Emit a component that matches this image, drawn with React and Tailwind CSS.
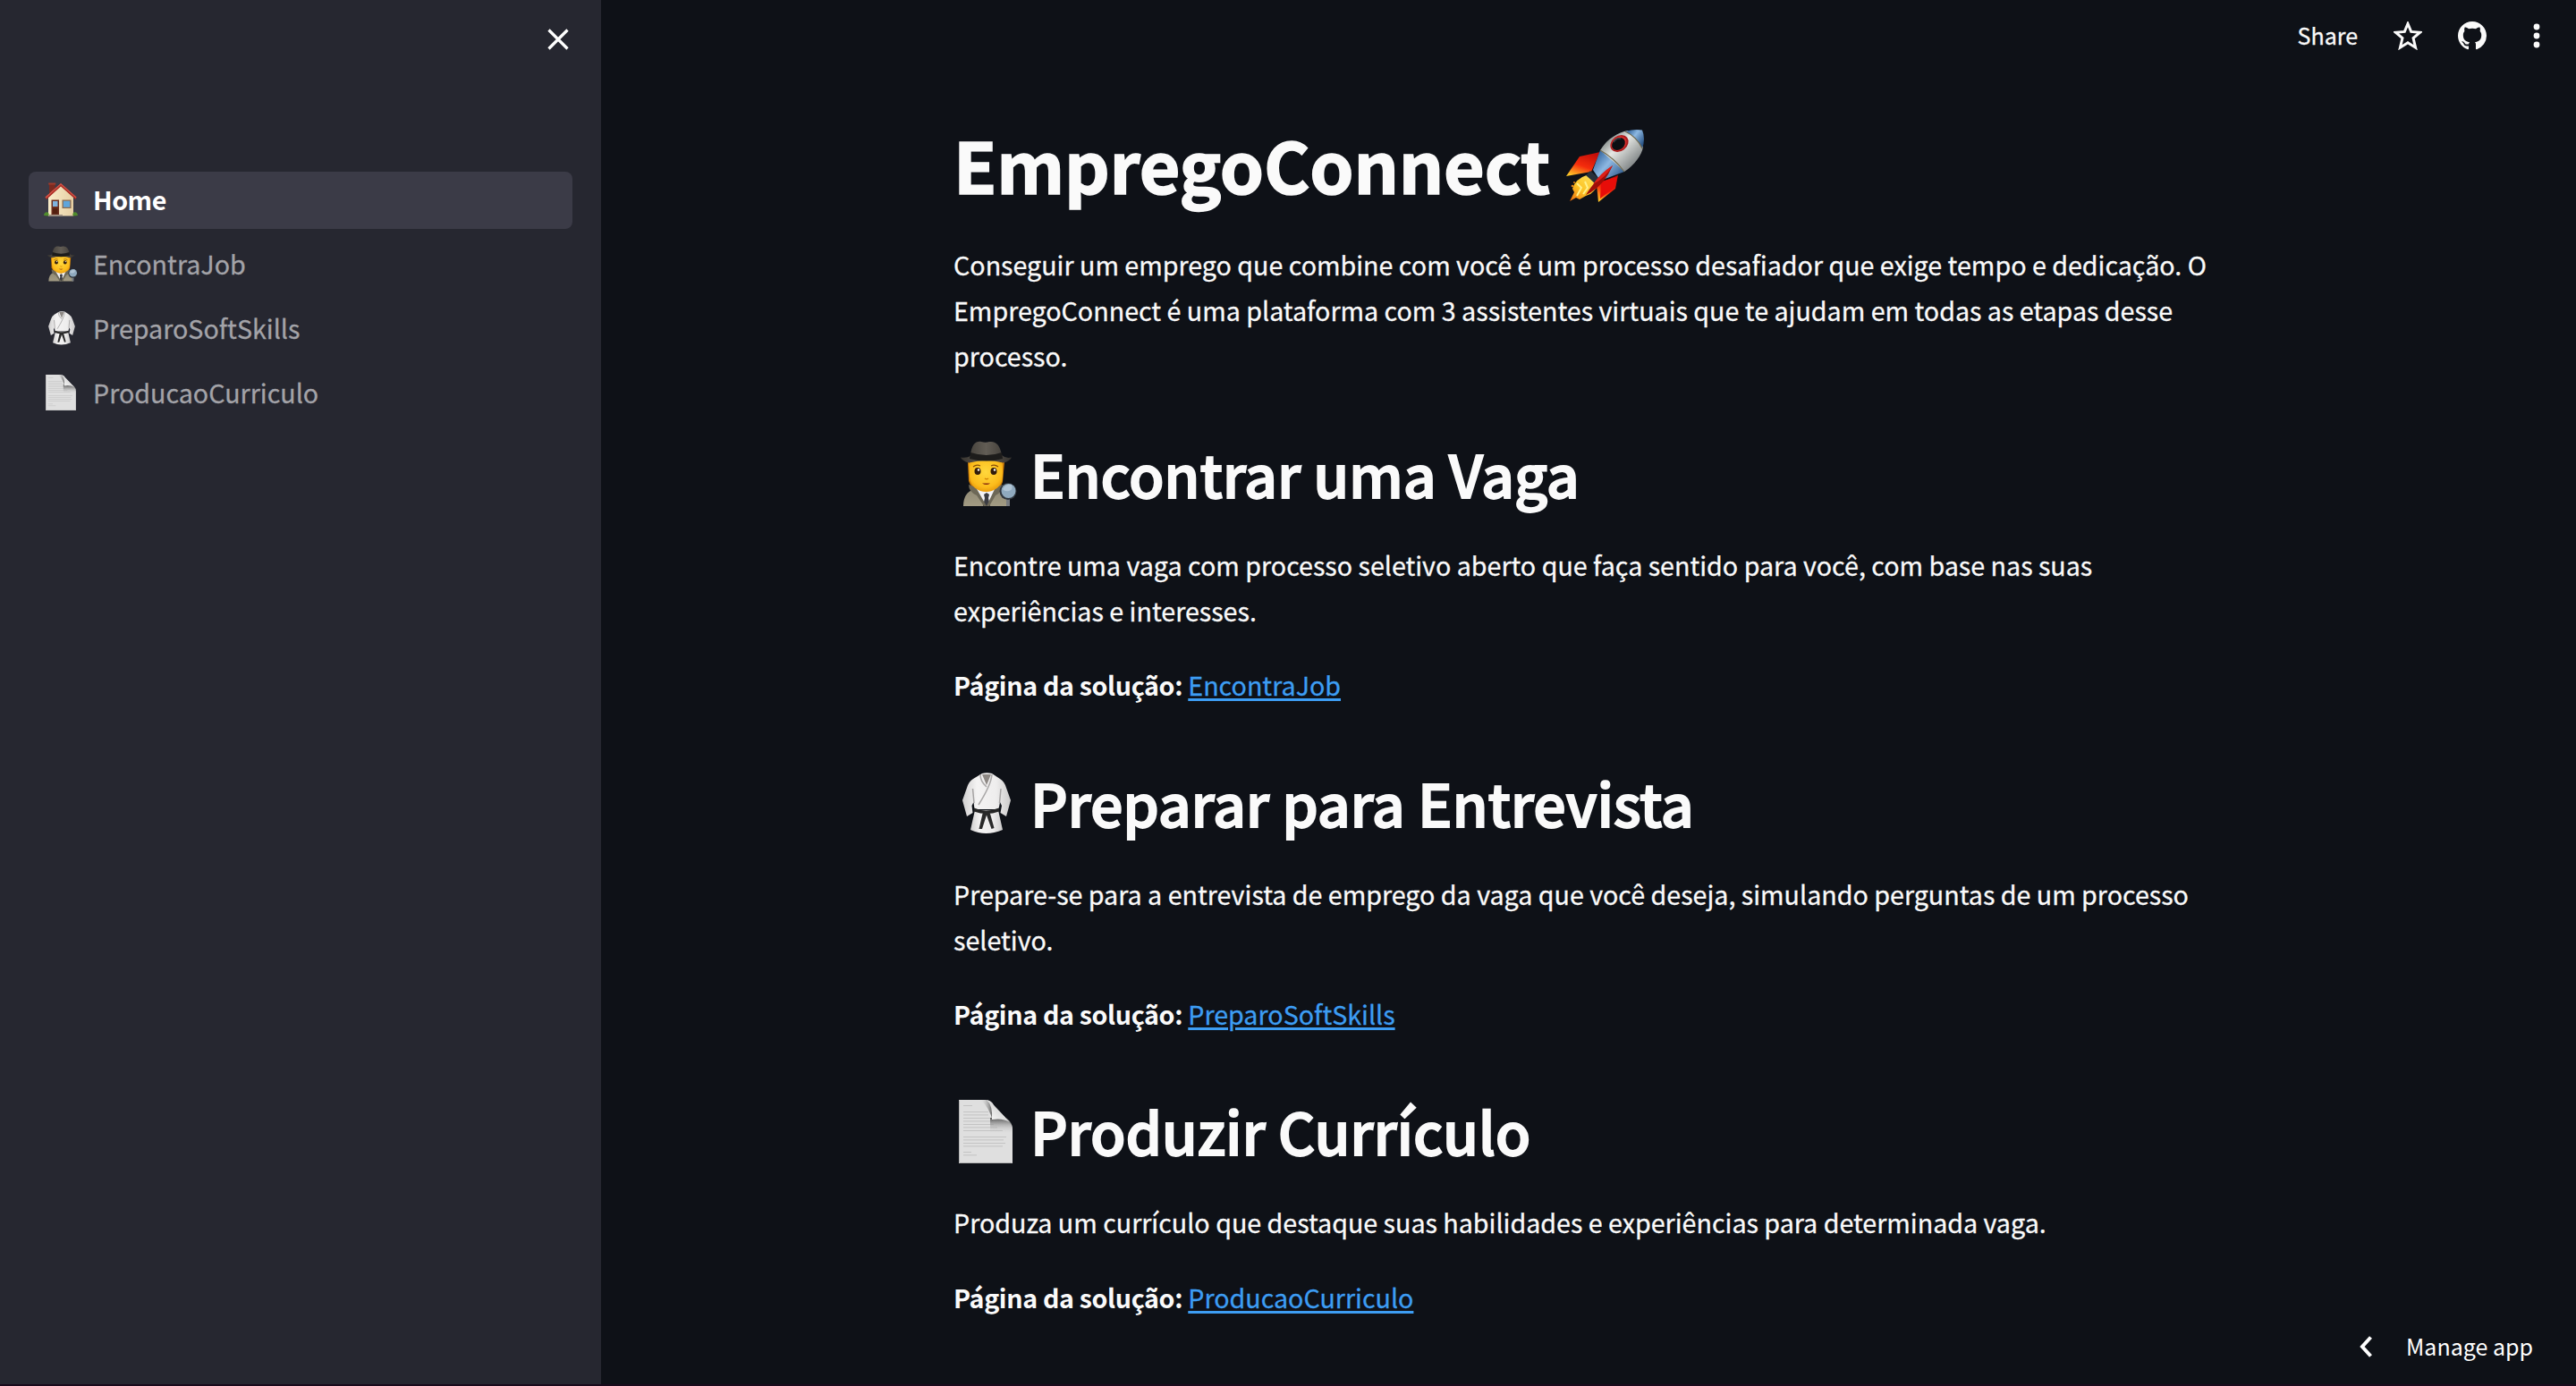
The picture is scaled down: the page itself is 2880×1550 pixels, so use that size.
function HouseIcon({ className }) {
  return (
    <svg viewBox="0 0 76 76" className={className}>
      <defs>
        <linearGradient id="wall" x1="0" x2="1">
          <stop offset="0" stopColor="#f9ecc9" />
          <stop offset="1" stopColor="#e6cfa4" />
        </linearGradient>
      </defs>
      <rect x="12" y="1" width="13" height="24" fill="#7c2a20" />
      <rect x="10.500" y="0" width="16" height="4" fill="#a03a2c" />
      <path d="M10 32 38 6 66 32V74H10Z" fill="url(#wall)" />
      <path d="M38 1 73 32 71 37 38 8 6 37 3 32Z" fill="#ad2c24" />
      <path d="M38 1 73 32 72 34 38 4 5 34 3 32Z" fill="#d2574a" />
      <rect x="17" y="38" width="17" height="35" fill="#6b2f1e" />
      <rect x="20" y="41" width="11" height="12" fill="#7fb4dd" />
      <rect x="20" y="57" width="11" height="12" fill="#53200f" />
      <rect x="41" y="38" width="20" height="19" fill="#8d6a4b" />
      <rect x="43.500" y="40.500" width="15" height="14" fill="#5fa5db" />
      <rect x="12" y="71" width="30" height="4" fill="#9a8d80" />
      <path d="M0 73c0-6 5-9 9-7 3 2 3 7 1 8Z" fill="#4f8a2c" />
      <path d="M76 73c0-6-5-9-9-7-3 2-3 7-1 8Z" fill="#4f8a2c" />
    </svg>
  );
}

function DetectiveIcon({ className, id }) {
  return (
    <svg viewBox="0 0 64 74" className={className}>
      <defs>
        <linearGradient id={`${id}-hat`} x1="0" x2="1">
          <stop offset="0" stopColor="#37342f" />
          <stop offset="0.5" stopColor="#625d55" />
          <stop offset="1" stopColor="#34312d" />
        </linearGradient>
        <radialGradient id={`${id}-face`} cx="0.5" cy="0.4" r="0.65">
          <stop offset="0" stopColor="#ffd83d" />
          <stop offset="0.7" stopColor="#fcbc1b" />
          <stop offset="1" stopColor="#e29108" />
        </radialGradient>
        <linearGradient id={`${id}-coat`} x1="0" y1="0" x2="0" y2="1">
          <stop offset="0" stopColor="#8f8974" />
          <stop offset="1" stopColor="#a39c84" />
        </linearGradient>
      </defs>
      <path d="M9 24h41l-2 22q-2 6-7 8H17q-5-3-7-9Z" fill="#c97a08" />
      <path d="M4 73q0-15 12-19l14 6 14-6q11 4 11 19Z" fill={`url(#${id}-coat)`} />
      <path d="m20 52-3 5 12 16 13-16-3-5Z" fill="#f3f3f5" />
      <path d="m27 60 3-2 3 2-1 4 2 9h-8l2-9Z" fill="#3b3c42" />
      <path d="m18 52-8-3q0 8 9 12l8 12h3Z" fill="#6d6857" />
      <path d="m40 52 8-3q0 8-8 12l-7 12h-3Z" fill="#6d6857" />
      <path d="M10 25q9-5 20-5t18 5v15c0 11-10 17-18.500 17S11 51 11 40Z" fill={`url(#${id}-face)`} />
      <ellipse cx="20" cy="34" rx="3.500" ry="4" fill="#321c0b" />
      <ellipse cx="38" cy="34" rx="3.500" ry="4" fill="#321c0b" />
      <circle cx="21" cy="32.500" r="1.200" fill="#fff" />
      <circle cx="39" cy="32.500" r="1.200" fill="#fff" />
      <path d="M15 29q4-3 8-1M35 28q4-2 8 1" stroke="#8a4f07" strokeWidth="1.200" fill="none" />
      <path d="M28 42q2 1.500 4 0" stroke="#d28508" strokeWidth="1.500" fill="none" />
      <path d="M25 47.500h9q-4 3-9 0Z" fill="#83270e" />
      <path d="M1 18.500q8 1 11-2C13 4 18 0 24 1q5 1.500 9 0c8-1 12 4 14 15q4 4 11 2.500-2 4-9 6-19-5-39 0-7-2-9-6Z" fill={`url(#${id}-hat)`} />
      <path d="M12 13q18 6 35 0l1 7q-18 5-37 0Z" fill="#1d1c1b" />
      <rect x="52" y="65" width="4" height="8" fill="#777b80" />
      <circle cx="54" cy="56.500" r="9.500" fill="#30363d" />
      <circle cx="54.500" cy="56" r="8" fill="#8fa9be" />
      <path d="M48 54q3-6 10-5 2 6-3 7t-7-2Z" fill="#b0c4d4" />
    </svg>
  );
}

function KimonoIcon({ className, id }) {
  return (
    <svg viewBox="0 0 54 69" className={className}>
      <defs>
        <linearGradient id={`${id}-cloth`} x1="0" x2="1">
          <stop offset="0" stopColor="#d0cfcf" />
          <stop offset="0.3" stopColor="#f4f3f3" />
          <stop offset="0.7" stopColor="#eeeded" />
          <stop offset="1" stopColor="#cbcaca" />
        </linearGradient>
      </defs>
      <path d="M14 42 9 64q17 8 36 0l-5-22Z" fill={`url(#${id}-cloth)`} />
      <path d="M22 1 12 7Q7 10 5 17L0 31 5 49 11.500 45 10.500 37 12.500 33 13.500 41H40.500L42 33 44 37 42.500 45 49 49 54 31 49 17Q47 10 42 7L33 1Q27-.5 22 1Z" fill={`url(#${id}-cloth)`} />
      <path d="M22 2h10l-5 12Z" fill="#8d8884" />
      <path d="M20 2q0 8 7 14M33 2q-1 12-15 34" stroke="#aaa8a8" strokeWidth="1.600" fill="none" />
      <path d="m11.500 18 1.500 16M43 18l-1.500 16" stroke="#a5a3a3" strokeWidth="1.500" fill="none" />
      <path d="M13 39.500q13 6 28 0v4q-14 5-28 0Z" fill="#252525" />
      <path d="M25 43h4l2 3 4.500 16-3 1L27 47.500 22 63h-3.500l4-17Z" fill="#292929" />
    </svg>
  );
}

const PAGE_LINES = [
  [5, 6, 10], [5, 13, 28], [5, 16.5, 28], [5, 20, 30], [5, 23.5, 32], [5, 27, 34], [5, 30.5, 38], [5, 34, 44],
  [5, 41, 48], [5, 44.5, 45], [5, 48, 47], [5, 51.5, 44], [5, 58, 9], [5, 61.5, 15],
];

function PageIcon({ className, id }) {
  return (
    <svg viewBox="0 0 60 71" className={className}>
      <defs>
        <linearGradient id={`${id}-curl`} x1="0" y1="1" x2="1" y2="0">
          <stop offset="0" stopColor="#ffffff" />
          <stop offset="1" stopColor="#bdbdbd" />
        </linearGradient>
        <linearGradient id={`${id}-top`} x1="0" x2="1">
          <stop offset="0" stopColor="#dfdfdf" stopOpacity="0" />
          <stop offset="1" stopColor="#555555" />
        </linearGradient>
        <linearGradient id={`${id}-shade`} x1="0" y1="0" x2="0" y2="1">
          <stop offset="0" stopColor="#555555" />
          <stop offset="1" stopColor="#dfdfdf" stopOpacity="0" />
        </linearGradient>
      </defs>
      <path d="M0 0H30Q36 1 39 6L57 25Q60 28 60 33V71H0Z" fill="#dfdfdf" />
      {PAGE_LINES.map(([x, y, w]) => (
        <rect key={y} x={x} y={y} width={w} height="0.8" fill="#bcbcbc" />
      ))}
      <path d="M24 0h6q6 1 8 6v18Q34 8 24 0Z" fill={`url(#${id}-top)`} />
      <path d="M35 20h18q7 5 7 13v5H35Z" fill={`url(#${id}-shade)`} />
      <path d="M31 0q6 1 8 6L57 25q-8-5-20-3Q38 6 31 0Z" fill={`url(#${id}-curl)`} />
      <path d="M.5.5V70.500H59.500" stroke="#b4b4b4" fill="none" />
    </svg>
  );
}

function RocketIcon({ className }) {
  return (
    <svg viewBox="0 0 88 84" className={className}>
      <defs>
        <linearGradient id="hull" x1="0.200" y1="0.200" x2="0.800" y2="0.800">
          <stop offset="0" stopColor="#8f9694" />
          <stop offset="0.350" stopColor="#e6e8e4" />
          <stop offset="1" stopColor="#84898a" />
        </linearGradient>
        <linearGradient id="blue" x1="0.100" y1="0.200" x2="0.900" y2="0.800">
          <stop offset="0" stopColor="#3c6ea5" />
          <stop offset="0.400" stopColor="#8db8e2" />
          <stop offset="1" stopColor="#2b5587" />
        </linearGradient>
        <linearGradient id="fin" x1="0.700" y1="0" x2="0.200" y2="1">
          <stop offset="0" stopColor="#c20d08" />
          <stop offset="0.550" stopColor="#f52c0c" />
          <stop offset="1" stopColor="#ffc928" />
        </linearGradient>
        <linearGradient id="flame" x1="1" y1="0" x2="0" y2="1">
          <stop offset="0" stopColor="#ffe96b" />
          <stop offset="0.600" stopColor="#fcc324" />
          <stop offset="1" stopColor="#e9670c" />
        </linearGradient>
      </defs>
      <path d="M38 26 15 31 0 53l28-5Z" fill="url(#fin)" />
      <path d="M58 52 55 67 36 82l-2-20Z" fill="url(#fin)" />
      <path d="M57 54 54 66 38 78l1-19Z" fill="#e80d09" />
      <path d="M25 51Q10 56 7 67l2 4-5 10 7-4 4 2 7-4 5-2q7-5 11-15Z" fill="url(#flame)" />
      <path d="m12 61 5 5-5 9M21 59l3 7-5 7" stroke="#fff08a" strokeWidth="2" fill="none" />
      <circle cx="7" cy="64" r="1.300" fill="#e58516" />
      <circle cx="9" cy="60" r="1" fill="#e58516" />
      <path d="m27 47 10 9-5 5-10-9Z" fill="#28313b" />
      <path d="M38 24 30 46l8 12 27-10 5-9Z" fill="url(#blue)" />
      <path d="M38 24C46 11 58 4 69 2L86 20C85 29 76 41 65 48Q51 35 38 24Z" fill="url(#hull)" />
      <path d="M66 3Q76 0 85 1.500 89 11 85 22 79 9 66 3Z" fill="url(#blue)" />
      <path d="M38 24Q54 33 65 48M66 3Q79 9 85 22" stroke="#706b50" strokeWidth="1.200" fill="none" />
      <ellipse cx="59.500" cy="16.500" rx="11" ry="8.500" transform="rotate(-38 59.500 16.500)" fill="#a9181a" />
      <ellipse cx="59" cy="16.500" rx="9.500" ry="7.500" transform="rotate(-38 59 16.500)" fill="#d42f2c" />
      <ellipse cx="58.500" cy="17" rx="8" ry="6.300" transform="rotate(-38 58.500 17)" fill="#0c0e12" />
      <path d="M53 15q3-5 8-4" stroke="#3a4046" strokeWidth="1.500" fill="none" />
      <path d="M52 41Q36 52 22 74 42 65 52 41Z" fill="#9e0d08" />
      <path d="M52 41Q38 50 30 62 44 55 52 41Z" fill="#df1e18" />
    </svg>
  );
}

const NAV = [
  { label: "Home", active: true, icon: <HouseIcon className="h-[39px] w-[38px]" /> },
  { label: "EncontraJob", icon: <DetectiveIcon id="nav-detective" className="ml-[3px] h-10 w-[35px]" /> },
  { label: "PreparoSoftSkills", icon: <KimonoIcon id="nav-kimono" className="ml-[5px] h-[38px] w-[30px]" /> },
  { label: "ProducaoCurriculo", icon: <PageIcon id="nav-page" className="ml-[2px] h-10 w-[34px]" /> },
];

const SECTIONS = [
  {
    title: "Encontrar uma Vaga",
    icon: <DetectiveIcon id="detective" className="mt-[7px] ml-[7px] h-[74px] w-[64px]" />,
    lines: [
      "Encontre uma vaga com processo seletivo aberto que faça sentido para você, com base nas suas",
      "experiências e interesses.",
    ],
    link: "EncontraJob",
  },
  {
    title: "Preparar para Entrevista",
    icon: <KimonoIcon id="kimono" className="mt-2.5 ml-[10px] h-[69px] w-[54px]" />,
    lines: [
      "Prepare-se para a entrevista de emprego da vaga que você deseja, simulando perguntas de um processo",
      "seletivo.",
    ],
    link: "PreparoSoftSkills",
  },
  {
    title: "Produzir Currículo",
    icon: <PageIcon id="page" className="mt-[9px] ml-1.5 h-[71px] w-[60px]" />,
    lines: ["Produza um currículo que destaque suas habilidades e experiências para determinada vaga."],
    link: "ProducaoCurriculo",
  },
];

function Lines({ lines }) {
  return (
    <p className="leading-[51.2px] whitespace-nowrap [-webkit-text-stroke:0.3px_#fafafa]">
      {lines.map((line) => (
        <span key={line} className="block">{line}</span>
      ))}
    </p>
  );
}

export default function App() {
  return (
    <div className="relative flex h-[1550px] w-[2880px] overflow-hidden bg-[#0e1117] font-['Noto_Sans_CJK_JP','Noto_Sans',sans-serif] text-[28.65px] text-[#fafafa]">
      <aside className="h-full w-[672px] shrink-0 bg-[#262730]">
        <div className="flex h-[192px] justify-end pt-8 pr-[36px]">
          <svg viewBox="0 0 24 24" className="size-6" stroke="#fff" strokeWidth="3.200">
            <path d="M1.500 1.500 22.500 22.500M22.500 1.500 1.500 22.500" />
          </svg>
        </div>
        <nav className="flex flex-col gap-2 px-8">
          {NAV.map((item) => (
            <a
              key={item.label}
              className={
                item.active
                  ? "flex h-16 items-center rounded-lg bg-[#3b3b47] font-bold tracking-[-0.5px] text-white"
                  : "flex h-16 items-center text-[#a3a3a8] [-webkit-text-stroke:0.3px_#a3a3a8]"
              }
            >
              <span className="flex w-[72px] shrink-0 pb-0.5 pl-[17px]">{item.icon}</span>
              <span className="pb-1 leading-[51px]">{item.label}</span>
            </a>
          ))}
        </nav>
      </aside>

      <main className="flex-1">
        <header className="flex h-[80px] items-center justify-end pr-[22px]">
          <span className="mr-[40px] pb-0.5 text-[25px] leading-10 [-webkit-text-stroke:0.3px_#fafafa]">Share</span>
          <svg viewBox="1 1 28 28" className="mr-[40px] size-8" fill="none" stroke="#fafafa" strokeWidth="2.600">
            <path d="M15 3.200 18.200 11 27 11.700 20.300 17.300 22.500 26.500 15 21.800 7.500 26.500 9.700 17.300 3 11.700 11.800 11Z" />
          </svg>
          <svg viewBox="0 0 16 16" className="mr-[46px] size-8" fill="#fafafa">
            <path d="M8 0C3.580 0 0 3.580 0 8c0 3.540 2.290 6.530 5.470 7.590.4.070.55-.17.55-.38 0-.19-.01-.82-.01-1.490-2.010.37-2.530-.49-2.690-.94-.09-.23-.48-.94-.82-1.130-.28-.15-.68-.52-.01-.53.63-.01 1.080.58 1.230.82.72 1.210 1.870.87 2.330.66.07-.52.28-.87.51-1.070-1.780-.2-3.640-.89-3.640-3.950 0-.87.31-1.590.82-2.150-.08-.2-.36-1.020.08-2.120 0 0 .67-.21 2.200.82.64-.18 1.320-.27 2-.27s1.360.09 2 .27c1.530-1.040 2.200-.82 2.200-.82.44 1.100.16 1.920.08 2.120.51.56.82 1.270.82 2.150 0 3.070-1.870 3.750-3.650 3.950.29.25.54.73.54 1.480 0 1.070-.01 1.930-.01 2.200 0 .21.15.46.55.38A8.010 8.010 0 0 0 16 8c0-4.420-3.580-8-8-8Z" />
          </svg>
          <svg viewBox="0 0 32 32" className="h-8 w-8" fill="#fafafa">
            <circle cx="10" cy="6" r="3.400" />
            <circle cx="10" cy="16" r="3.400" />
            <circle cx="10" cy="26" r="3.400" />
          </svg>
        </header>

        <div className="ml-[394px] w-[1408px] pt-[50px]">
          <h1 className="mb-[34px] flex h-[106px] text-[78.8px] leading-[106px] font-bold tracking-[-0.2px] whitespace-nowrap [-webkit-text-stroke:1.600px_#fafafa]">
            EmpregoConnect
            <RocketIcon className="mt-[14px] ml-[18px] h-[84px] w-[88px]" />
          </h1>
          <Lines
            lines={[
              "Conseguir um emprego que combine com você é um processo desafiador que exige tempo e dedicação. O",
              "EmpregoConnect é uma plataforma com 3 assistentes virtuais que te ajudam em todas as etapas desse",
              "processo.",
            ]}
          />
          {SECTIONS.map((section) => (
            <section key={section.title} className="pt-[62.200px]">
              <h2 className="mb-[34px] flex h-[86px] text-[64.5px] leading-[86px] font-medium tracking-[-0.23px] whitespace-nowrap [-webkit-text-stroke:1.800px_#fafafa]">
                <span className="flex w-[86px] shrink-0">{section.icon}</span>
                {section.title}
              </h2>
              <Lines lines={section.lines} />
              <p className="mt-8 leading-[51.2px] whitespace-nowrap">
                <strong className="font-bold tracking-[-0.36px]">Página da solução: </strong>
                <a className="text-[#3d9df3] underline decoration-[3px] underline-offset-[3px] [-webkit-text-stroke:0.3px_#3d9df3]">{section.link}</a>
              </p>
            </section>
          ))}
        </div>
      </main>

      <button className="absolute right-0 bottom-0 flex h-[88px] w-[254px] items-center bg-[#0e1117] pl-[12px] text-[25px] text-white">
        <svg viewBox="0 0 14 24" className="mr-[38px] h-6 w-[14px]" fill="none" stroke="#fff" strokeWidth="4">
          <path d="M12.500 1.500 3 12 12.500 22.500" />
        </svg>
        <span className="pb-0.5 leading-10">Manage app</span>
      </button>
      <div className="absolute inset-x-0 bottom-0 h-[2px] bg-[#1a0a1c]" />
    </div>
  );
}
